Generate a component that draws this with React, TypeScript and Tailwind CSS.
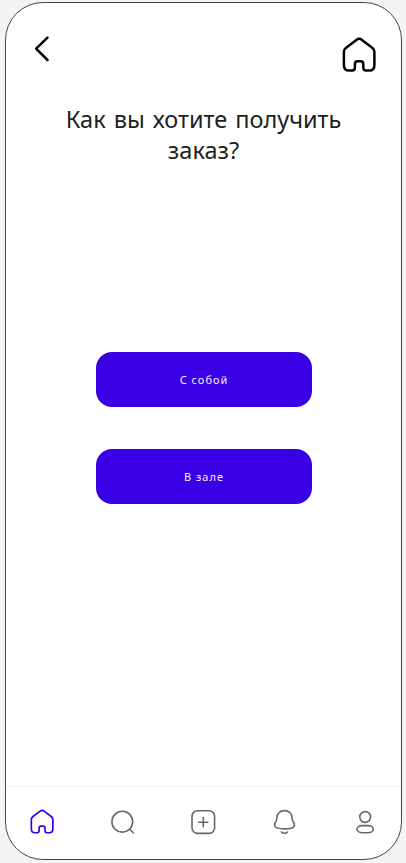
import React from "react";

function HomeIcon({ className, stroke }: { className: string; stroke: number }) {
  return (
    <svg viewBox="0 0 34 36" fill="none" stroke="currentColor" strokeWidth={stroke} strokeLinejoin="round" className={className}>
      <path d="M1.9 14.8C1.9 13 2.4 12 3.8 10.9L14.4 2.9C16.2 1.5 18.2 1.5 20 2.9L30.5 10.9C31.9 12 32.4 13 32.4 14.8V28.2C32.4 31.8 30.6 33.6 27.2 33.6H24.2C22.2 33.6 21.3 32.6 21.3 30.8V27.2C21.3 25.2 20.4 24.3 18.5 24.3H15.7C13.8 24.3 12.9 25.2 12.9 27.2V30.8C12.9 32.6 12 33.6 10 33.6H7.2C3.7 33.6 1.9 31.8 1.9 28.2Z" />
    </svg>
  );
}

function NavIcon({ children }: { children: React.ReactNode }) {
  return (
    <svg viewBox="0 0 28 28" fill="none" stroke="currentColor" strokeWidth="1.6" strokeLinecap="round" strokeLinejoin="round" className="size-7">
      {children}
    </svg>
  );
}

function ChoiceButton({ children }: { children: React.ReactNode }) {
  return (
    <button className="h-[55px] w-[216px] rounded-2xl bg-[#3a00e5] text-[11px] leading-4 tracking-[1px] text-[#f3efff]">
      {children}
    </button>
  );
}

export default function App() {
  return (
    <div className="h-[863px] w-[406px] bg-[#f4f4f4] pt-[2px] pl-[5px] font-['Noto_Sans',sans-serif]">
      <main className="flex h-[858px] w-[397px] flex-col overflow-hidden rounded-[38px] border border-[#444] bg-white">
        <header className="flex h-[94px] shrink-0 items-start justify-between pt-[34px] pr-[25px] pl-7">
          <button aria-label="Назад">
            <svg viewBox="0 0 16 28" fill="none" stroke="black" strokeWidth="2.5" strokeLinecap="round" strokeLinejoin="round" className="h-7 w-4 overflow-visible">
              <path d="M13.5 0.6L2.1 11.7L13.5 23" />
            </svg>
          </button>
          <button aria-label="Главная">
            <HomeIcon className="h-9 w-[34px] text-black" stroke={2.5} />
          </button>
        </header>
        <h1 className="mt-[7px] h-[62px] text-center text-[23.5px] leading-[31px] text-[#1d1f20] [word-spacing:1.9px]">
          Как вы хотите получить
          <br />
          заказ?
        </h1>
        <div className="mt-[186px] ml-[90px] flex flex-col gap-[42px]">
          <ChoiceButton>С собой</ChoiceButton>
          <ChoiceButton>В зале</ChoiceButton>
        </div>
        <nav className="mt-auto flex h-[73px] items-start justify-between border-t border-[#eeeeee] px-[22px] pt-[21px] text-[#65666e]">
          <span className="flex size-7 items-center justify-center">
            <HomeIcon className="h-[25.5px] w-[24px] text-[#3a00e5]" stroke={2.4} />
          </span>
          <NavIcon>
            <circle cx="13.3" cy="13.7" r="10.4" />
            <path d="M20.8 21.2L24.4 24.8" />
          </NavIcon>
          <NavIcon>
            <rect x="2" y="2.8" width="22.6" height="22.6" rx="5.5" />
            <path d="M13.3 9.6V18.8M8.7 14.2H17.9" />
          </NavIcon>
          <NavIcon>
            <path d="M14.5 2.6C9.7 2.6 7 6 6.9 9.6C6.9 12.6 6.3 13.2 5.4 14.5C4.7 15.5 4.5 16.2 4.6 17.3C4.9 20 8.2 20.9 14.5 20.9C20.8 20.9 24.1 20 24.4 17.3C24.5 16.2 24.3 15.5 23.6 14.5C22.7 13.2 22.1 12.6 22.1 9.6C22 6 19.3 2.6 14.5 2.6Z" />
            <path d="M11.5 24C12.8 25.7 16.2 25.7 17.5 24" />
          </NavIcon>
          <NavIcon>
            <circle cx="14.2" cy="9" r="5.4" />
            <rect x="6" y="17.6" width="16.4" height="7.1" rx="5.5" ry="3.55" />
          </NavIcon>
        </nav>
      </main>
    </div>
  );
}
